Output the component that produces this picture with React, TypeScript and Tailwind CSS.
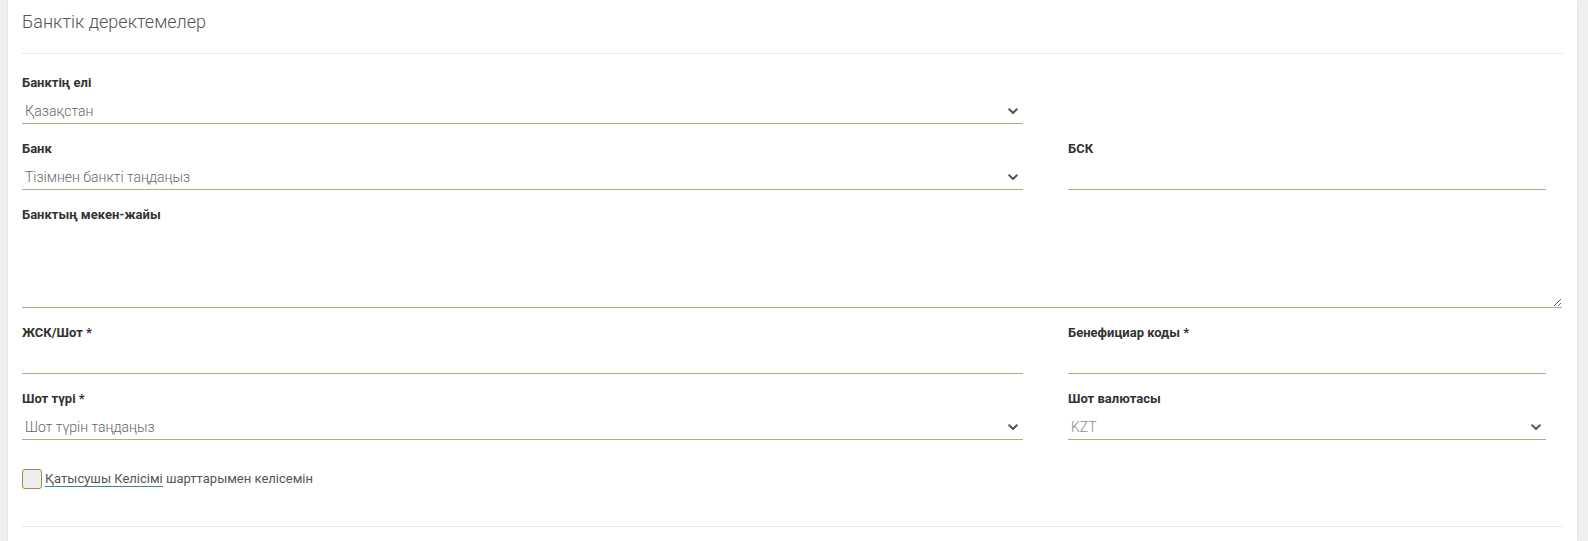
import React from "react";

const Chevron = () => (
  <svg width="10" height="7" viewBox="0 0 10 7" className="shrink-0">
    <path d="M1.2 1.3 L5 5 L8.8 1.3" fill="none" stroke="#555" strokeWidth="2" strokeLinecap="round" strokeLinejoin="round" />
  </svg>
);

const Label = ({ children }: { children: React.ReactNode }) => (
  <div className="text-[13px] leading-[16px] font-bold text-[#333]">{children}</div>
);

const SelectField = ({ label, value, light }: { label: string; value: string; light?: boolean }) => (
  <div className="flex flex-col">
    <Label>{label}</Label>
    <div className="mt-[3px] h-[30px] border-b border-[#b3a97e] flex items-start justify-between pl-[3px] pr-[5px] pt-[7px]">
      <span className={`text-[14px] leading-[20px] font-light ${light ? "text-[#8a8a8a]" : "text-[#666]"}`}>{value}</span>
      <span className="pt-[7px]"><Chevron /></span>
    </div>
  </div>
);

const InputField = ({ label }: { label: string }) => (
  <div className="flex flex-col">
    <Label>{label}</Label>
    <div className="mt-[3px] h-[30px] border-b border-[#b3a97e]" />
  </div>
);

export default function App() {
  return (
    <div className="w-[1588px] h-[541px] bg-[#efefef] overflow-hidden" style={{ fontFamily: "Roboto, 'Liberation Sans', sans-serif" }}>
      <div className="ml-[8px] w-[1569px] h-[541px] bg-white px-[14px] shadow-[0_0_2px_rgba(0,0,0,0.12)]">
        <div className="pt-[10px] pb-[19px] border-b border-[#e9e9e9]">
          <div className="text-[18px] leading-[24px] font-light text-[#555]">Банктік деректемелер</div>
        </div>

        <div className="pt-[21px] grid grid-cols-[1001px_478px] gap-x-[45px]">
          <SelectField label="Банктің елі" value="Қазақстан" />
          <div />

          <div className="mt-[17px]">
            <SelectField label="Банк" value="Тізімнен банкті таңдаңыз" />
          </div>
          <div className="mt-[17px]">
            <InputField label="БСК" />
          </div>

          <div className="col-span-2 mt-[17px] w-[1540px] flex flex-col">
            <Label>Банктың мекен-жайы</Label>
            <textarea className="mt-[3px] h-[82px] w-full border-b border-[#b3a97e] outline-none resize-y" />
          </div>

          <div className="mt-[17px]">
            <InputField label="ЖСК/Шот *" />
          </div>
          <div className="mt-[17px]">
            <InputField label="Бенефициар коды *" />
          </div>

          <div className="mt-[17px]">
            <SelectField label="Шот түрі *" value="Шот түрін таңдаңыз" />
          </div>
          <div className="mt-[17px]">
            <SelectField label="Шот валютасы" value="KZT" light />
          </div>
        </div>

        <div className="mt-[29px] flex items-center gap-[3px]">
          <div className="w-[20px] h-[20px] rounded-[3px] border border-[#a08a45] bg-[#eeeeee]" />
          <div className="text-[13px] leading-[18px] text-[#555]">
            <span className="border-b border-[#2a8f8f]">Қатысушы Келісімі</span> шарттарымен келісемін
          </div>
        </div>

        <div className="mt-[37px] border-b border-[#e9e9e9]" />
      </div>
    </div>
  );
}
